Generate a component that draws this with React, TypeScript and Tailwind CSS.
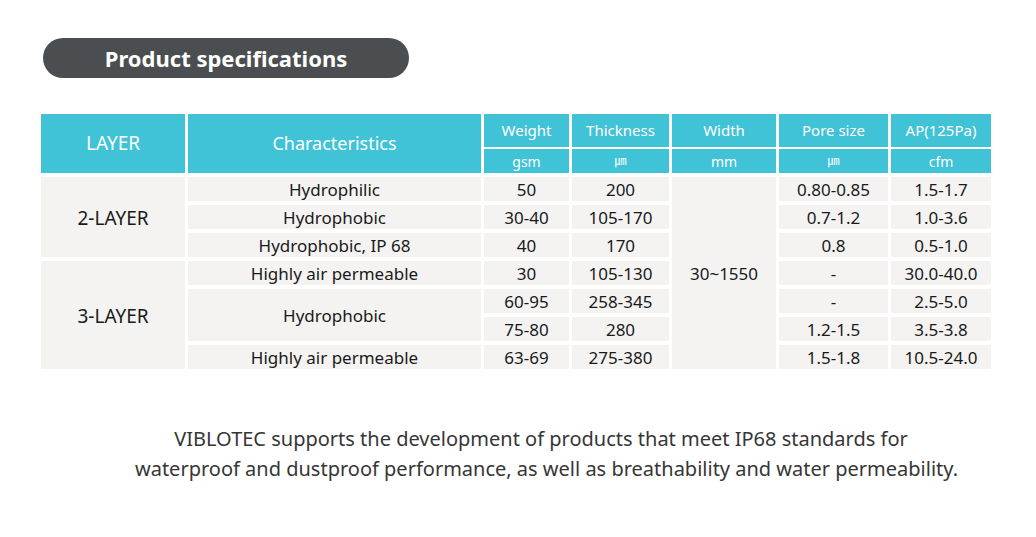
import { Fragment } from "react"

const font = { fontFamily: '"Noto Sans", "Noto Sans CJK KR", sans-serif' }

type Row = {
  layer?: { label: string; span: string }
  chr?: { label: string; span?: string }
  weight: string
  thickness: string
  pore: string
  ap: string
}

const rows: Row[] = [
  { layer: { label: "2-LAYER", span: "row-span-3" }, chr: { label: "Hydrophilic" }, weight: "50", thickness: "200", pore: "0.80-0.85", ap: "1.5-1.7" },
  { chr: { label: "Hydrophobic" }, weight: "30-40", thickness: "105-170", pore: "0.7-1.2", ap: "1.0-3.6" },
  { chr: { label: "Hydrophobic, IP 68" }, weight: "40", thickness: "170", pore: "0.8", ap: "0.5-1.0" },
  { layer: { label: "3-LAYER", span: "row-span-4" }, chr: { label: "Highly air permeable" }, weight: "30", thickness: "105-130", pore: "-", ap: "30.0-40.0" },
  { chr: { label: "Hydrophobic", span: "row-span-2" }, weight: "60-95", thickness: "258-345", pore: "-", ap: "2.5-5.0" },
  { weight: "75-80", thickness: "280", pore: "1.2-1.5", ap: "3.5-3.8" },
  { chr: { label: "Highly air permeable" }, weight: "63-69", thickness: "275-380", pore: "1.5-1.8", ap: "10.5-24.0" },
]

const cols = "grid grid-cols-[144px_293px_85px_97px_104px_109px_100px] gap-x-[3px]"
const head = "flex items-center justify-center bg-[#40c3d6] text-white"
const cell = "flex items-center justify-center bg-[#f4f3f2] pt-[2px] text-[17px] text-[#1a1a1a]"

export default function App() {
  return (
    <div className="min-h-screen bg-white pb-10" style={font}>
      <div className="ml-[43px] pt-[38px]">
        <div className="flex h-[40px] w-[366px] items-center justify-center rounded-full bg-[#4b4e50] text-[22px] font-bold text-white">
          Product specifications
        </div>
      </div>

      <div className="ml-[41px] mt-[36px] w-fit">
        {/* header */}
        <div className={`${cols} grid-rows-[33px_24px] gap-y-[2px]`}>
          <div className={`${head} row-span-2 text-[19px]`}>LAYER</div>
          <div className={`${head} row-span-2 text-[18px]`}>Characteristics</div>
          <div className={`${head} text-[15px]`}>Weight</div>
          <div className={`${head} text-[15px]`}>Thickness</div>
          <div className={`${head} text-[15px]`}>Width</div>
          <div className={`${head} text-[15px]`}>Pore size</div>
          <div className={`${head} text-[15px]`}>AP(125Pa)</div>
          <div className={`${head} text-[14px]`}>gsm</div>
          <div className={`${head} text-[12px]`}>㎛</div>
          <div className={`${head} text-[14px]`}>mm</div>
          <div className={`${head} text-[12px]`}>㎛</div>
          <div className={`${head} text-[14px]`}>cfm</div>
        </div>

        {/* body */}
        <div className={`${cols} mt-[4px] grid-rows-[repeat(7,24px)] gap-y-[4px]`}>
          {rows.map((r, i) => (
            <Fragment key={i}>
              {r.layer && <div className={`${cell} ${r.layer.span} text-[19px]`}>{r.layer.label}</div>}
              {r.chr && <div className={`${cell} ${r.chr.span ?? ""}`}>{r.chr.label}</div>}
              <div className={cell}>{r.weight}</div>
              <div className={cell}>{r.thickness}</div>
              {i === 0 && <div className={`${cell} row-span-7`}>30~1550</div>}
              <div className={cell}>{r.pore}</div>
              <div className={cell}>{r.ap}</div>
            </Fragment>
          ))}
        </div>
      </div>

      <div className="ml-[100px] mt-[55px] w-[893px] text-center text-[20px] leading-[30px] text-[#363636]">
        <div className="pr-[11px]">
          VIBLOTEC supports the development of products that meet IP68 standards for
        </div>
        <div>
          waterproof and dustproof performance, as well as breathability and water permeability.
        </div>
      </div>
    </div>
  )
}
